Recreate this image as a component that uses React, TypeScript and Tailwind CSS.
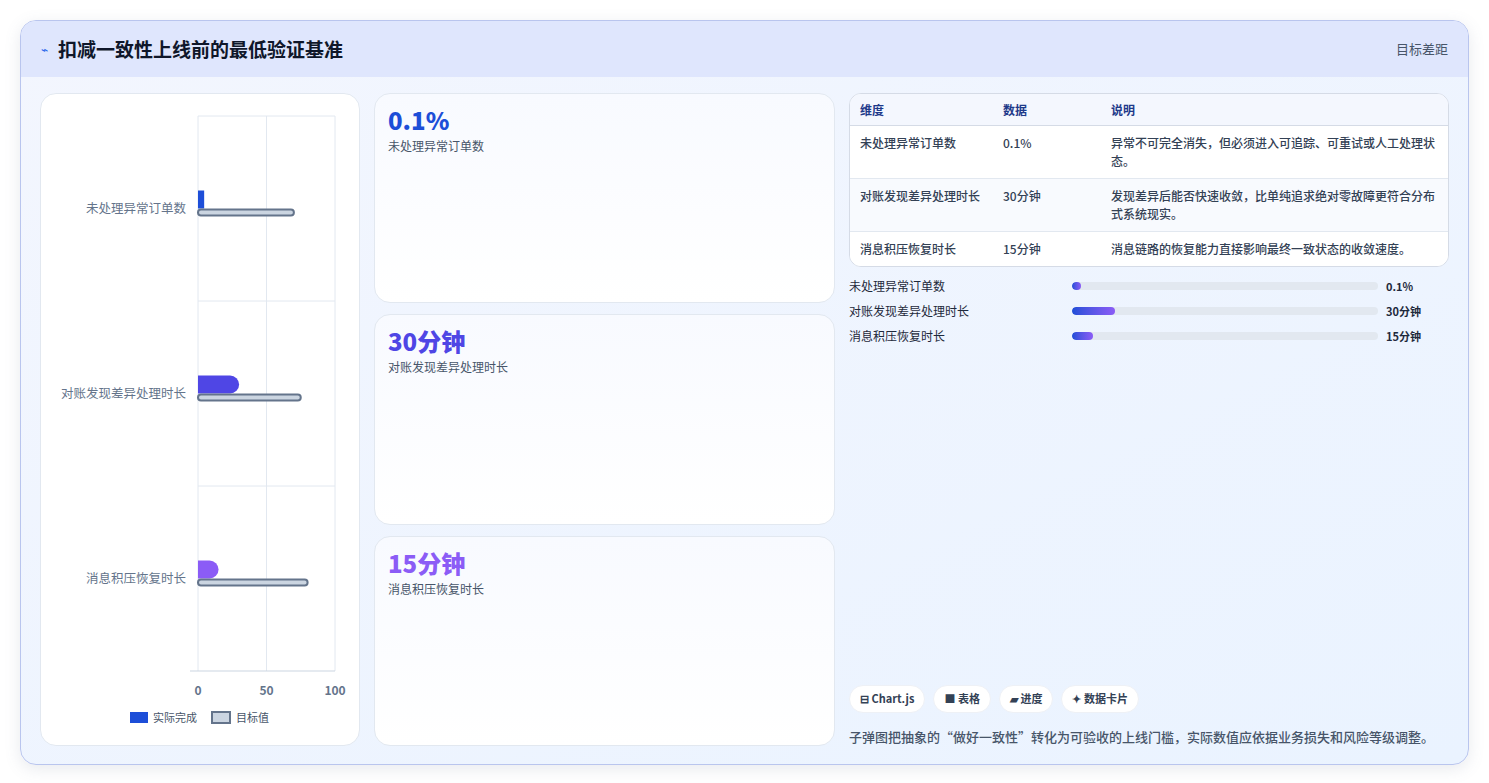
import React from 'react';

const font = { fontFamily: '"Noto Sans CJK SC", "Noto Sans", sans-serif' };

const rows = [
  { name: '未处理异常订单数', value: '0.1%', actual: 4.5, target: 70, desc: '异常不可完全消失，但必须进入可追踪、可重试或人工处理状态。', color: '#1d4ed8', pct: 3 },
  { name: '对账发现差异处理时长', value: '30分钟', actual: 30, target: 75, desc: '发现差异后能否快速收敛，比单纯追求绝对零故障更符合分布式系统现实。', color: '#4f46e5', pct: 14 },
  { name: '消息积压恢复时长', value: '15分钟', actual: 15, target: 80, desc: '消息链路的恢复能力直接影响最终一致状态的收敛速度。', color: '#8b5cf6', pct: 7 },
];

const Chart: React.FC = () => {
  const x0 = 157, w = 137, top = 22, band = 185;
  const sx = (v: number) => x0 + (v / 100) * w;
  return (
    <svg width="320" height="650" className="block">
      {[0, 50, 100].map(v => (
        <line key={v} x1={sx(v)} x2={sx(v)} y1={top} y2={top + band * 3} stroke="#e2e8f0" />
      ))}
      <line x1={x0} x2={sx(100)} y1={top} y2={top} stroke="#e2e8f0" />
      {[1, 2].map(i => (
        <line key={i} x1={x0} x2={sx(100)} y1={top + band * i} y2={top + band * i} stroke="#e2e8f0" />
      ))}
      <line x1={x0 - 8} x2={sx(100)} y1={top + band * 3} y2={top + band * 3} stroke="#cbd5e1" />
      {rows.map((r, i) => {
        const cy = top + band * i + band / 2;
        const aw = sx(r.actual) - x0;
        return (
          <g key={r.name}>
            <text x={145} y={cy + 4} textAnchor="end" fontSize="12.5" fill="#64748b">{r.name}</text>
            {aw < 12 ? (
              <rect x={x0} y={cy - 18} width={aw} height={18} fill={r.color} />
            ) : (
              <path d={`M${x0} ${cy - 18} H${x0 + aw - 9} A9 9 0 0 1 ${x0 + aw - 9} ${cy} H${x0} Z`} fill={r.color} />
            )}
            <rect x={x0} y={cy + 1} width={sx(r.target) - x0} height={6} rx={3} fill="#cbd5e1" stroke="#64748b" strokeWidth="2" />
          </g>
        );
      })}
      {[0, 50, 100].map(v => (
        <text key={v} x={sx(v)} y={top + band * 3 + 24} textAnchor="middle" fontSize="12" fontWeight="600" fill="#64748b">{v}</text>
      ))}
      <rect x={89} y={618} width={18} height={11} fill="#1d4ed8" />
      <text x={112} y={628} fontSize="11" fill="#475569">实际完成</text>
      <rect x={171} y={618} width={18} height={11} fill="#cbd5e1" stroke="#64748b" strokeWidth="2" />
      <text x={195} y={628} fontSize="11" fill="#475569">目标值</text>
    </svg>
  );
};

export default function App() {
  return (
    <div className="w-[1489px] h-[783px] bg-white pt-5 pl-5" style={font}>
      <div className="w-[1449px] h-[745px] rounded-2xl border border-[#b9c5ee] overflow-hidden flex flex-col bg-gradient-to-br from-[#f3f6fe] to-[#eaf3ff] shadow-[0_4px_16px_rgba(100,116,139,0.15)]">
        <div className="h-14 shrink-0 bg-[#dfe6fd] flex items-center justify-between px-5">
          <div className="flex items-center gap-2.5">
            <span className="text-[#2563eb] text-xs">⌁</span>
            <span className="text-[19px] font-bold text-[#0f172a]">扣减一致性上线前的最低验证基准</span>
          </div>
          <span className="text-[13px] text-[#475569]">目标差距</span>
        </div>
        <div className="flex-1 flex gap-[14px] px-[19px] pt-4 pb-[18px]">
          <div className="w-[320px] bg-white rounded-2xl border border-[#e2e8f0]">
            <Chart />
          </div>
          <div className="w-[461px] flex flex-col gap-[11px]">
            {rows.map(r => (
              <div key={r.name} className="flex-1 rounded-2xl border border-[#e2e8f0] bg-gradient-to-b from-[#f8faff] to-white px-[13px] py-3">
                <div className="text-2xl font-extrabold leading-7" style={{ color: r.color }}>{r.value}</div>
                <div className="text-xs text-[#475569] mt-1">{r.name}</div>
              </div>
            ))}
          </div>
          <div className="flex-1 flex flex-col">
            <div className="rounded-xl border border-[#d5dbe6] overflow-hidden bg-white text-xs">
              <div className="grid grid-cols-[143px_108px_1fr] bg-[#f4f7fe] border-b border-[#d5dbe6] h-8 items-center px-[10px] font-semibold text-[#1e3a8a]">
                <span>维度</span><span>数据</span><span>说明</span>
              </div>
              {rows.map((r, i) => (
                <div key={r.name} className={`grid grid-cols-[143px_108px_1fr] px-[10px] py-2 leading-[18px] font-medium text-[#334155] ${i === 1 ? 'bg-[#f8fafe]' : 'bg-white'} ${i < 2 ? 'border-b border-[#e2e8f0]' : ''}`}>
                  <span>{r.name}</span><span>{r.value}</span><span>{r.desc}</span>
                </div>
              ))}
            </div>
            <div className="flex flex-col gap-[9px] mt-[11px] text-xs">
              {rows.map(r => (
                <div key={r.name} className="flex items-center h-4">
                  <span className="w-[223px] text-[#1e293b]">{r.name}</span>
                  <div className="w-[306px] h-2 rounded-full bg-[#e2e8f0] overflow-hidden">
                    <div className="h-full rounded-full bg-gradient-to-r from-[#1d4ed8] to-[#8b5cf6]" style={{ width: `${r.pct}%` }} />
                  </div>
                  <span className="ml-2 font-bold text-[11px] text-[#1e293b]">{r.value}</span>
                </div>
              ))}
            </div>
            <div className="flex-1" />
            <div className="flex gap-2 text-[11px] font-semibold text-[#334155]">
              {['⊟ Chart.js', '■ 表格', '▰ 进度', '✦ 数据卡片'].map(t => (
                <span key={t} className="bg-white rounded-full border border-[#eef1f6] px-[10px] h-7 flex items-center">{t}</span>
              ))}
            </div>
            <div className="text-[13px] text-[#475569] font-medium mt-[14px] mb-0">子弹图把抽象的“做好一致性”转化为可验收的上线门槛，实际数值应依据业务损失和风险等级调整。</div>
          </div>
        </div>
      </div>
    </div>
  );
}
